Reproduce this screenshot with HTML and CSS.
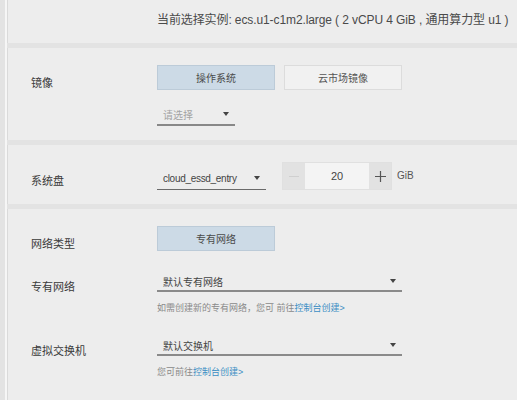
FILE: index.html
```html
<!DOCTYPE html>
<html lang="zh">
<head>
<meta charset="utf-8">
<link rel="stylesheet" href="styles.css">
</head>
<body>
<div class="page">
  <section class="panel panel-info">
    <div class="row">
      <div class="label"></div>
      <div class="info">当前选择实例: ecs.u1-c1m2.large ( 2 vCPU 4 GiB , 通用算力型 u1 )</div>
    </div>
  </section>

  <section class="panel panel-image">
    <div class="row row-btns">
      <div class="label label-low">镜像</div>
      <div class="btns">
        <button class="tab active">操作系统</button>
        <button class="tab">云市场镜像</button>
      </div>
    </div>
    <div class="row row-sub">
      <div class="label"></div>
      <div class="select select-sm placeholder"><span>请选择</span><i class="caret"></i></div>
    </div>
  </section>

  <section class="panel panel-disk">
    <div class="row">
      <div class="label">系统盘</div>
      <div class="select select-md"><span>cloud_essd_entry</span><i class="caret"></i></div>
      <div class="num">
        <span class="num-btn minus"><svg width="10" height="10" viewBox="0 0 10 10"><path d="M0 5.5h10" stroke="#cfcfcf" stroke-width="1"/></svg></span>
        <span class="num-val">20</span>
        <span class="num-btn plus"><svg width="11" height="11" viewBox="0 0 11 11"><path d="M0 5.5h11M5.5 0v11" stroke="#555" stroke-width="1.2"/></svg></span>
      </div>
      <span class="unit">GiB</span>
    </div>
  </section>

  <section class="panel panel-net">
    <div class="row row-btns">
      <div class="label label-low">网络类型</div>
      <div class="btns">
        <button class="tab active">专有网络</button>
      </div>
    </div>
    <div class="row row-vpc">
      <div class="label label-low">专有网络</div>
      <div class="field">
        <div class="select select-lg"><span>默认专有网络</span><i class="caret"></i></div>
        <div class="help">如需创建新的专有网络，您可 前往<a>控制台创建&gt;</a></div>
      </div>
    </div>
    <div class="row row-vsw">
      <div class="label label-low">虚拟交换机</div>
      <div class="field">
        <div class="select select-lg"><span>默认交换机</span><i class="caret"></i></div>
        <div class="help">您可前往<a>控制台创建&gt;</a></div>
      </div>
    </div>
  </section>
</div>
</body>
</html>
```

FILE: styles.css
```css
* { box-sizing: border-box; }
html, body {
  margin: 0;
  padding: 0;
  background: #e3e3e3;
  font-family: "Liberation Sans", Arial, "Noto Sans CJK SC", sans-serif;
  color: #444;
  height: 400px;
  overflow: hidden;
}
.page {
  margin-left: 5px;
  border-left: 2px solid #f6f6f6;
  height: 400px;
  display: flex;
  flex-direction: column;
  gap: 5px;
}
.panel {
  background: #ededed;
  padding-left: 23px;
  border-left: 1px solid #dadada;
}
.row {
  display: flex;
  align-items: center;
}
.label {
  width: 126px;
  flex: none;
  font-size: 11px;
  color: #3a3a3a;
}
.label-low { padding-top: 8px; }

.panel-info { height: 43px; padding-top: 10px; }
.info { font-size: 12px; color: #4a4a4a; letter-spacing: -0.1px; }

.panel-image { height: 92px; padding-top: 17px; }
.btns { display: flex; gap: 9px; }
.tab {
  width: 118px;
  height: 25px;
  font-family: inherit;
  font-size: 10px;
  color: #555;
  background: #f1f1f1;
  border: 1px solid #dcdcdc;
  padding: 0;
}
.tab.active {
  background: #ccdae6;
  border-color: #bccbd8;
  color: #4a4a4a;
}
.row-sub { margin-top: 12px; }

.select {
  height: 24px;
  display: flex;
  align-items: center;
  justify-content: space-between;
  padding: 2px 6px 0 6px;
  border-bottom: 1.5px solid #6a6a6a;
  font-size: 10px;
  color: #444;
}
.select.placeholder { color: #a3a3a3; border-bottom-color: #888; border-bottom-width: 2px; }
.select-sm { width: 78px; }
.select-md { width: 109px; }
.select-md span { font-size: 10px; letter-spacing: -0.3px; }
.select-lg { width: 245px; border-bottom-width: 2px; border-bottom-color: #8a8a8a; padding-top: 4px; }
.caret {
  width: 0;
  height: 0;
  border-left: 3.5px solid transparent;
  border-right: 3.5px solid transparent;
  border-top: 4px solid #444;
}

.panel-disk { height: 59px; padding-top: 17px; }
.panel-disk .label { padding-top: 7px; }
.panel-disk .select { margin-top: 3px; }
.num {
  margin-left: 16px;
  width: 110px;
  height: 28px;
  display: flex;
  background: #f4f4f4;
  border: 1px solid #e0e0e0;
}
.num-btn {
  width: 22px;
  display: flex;
  align-items: center;
  justify-content: center;
  background: #e2e2e2;
}
.num-val {
  flex: 1;
  display: flex;
  align-items: center;
  justify-content: center;
  font-size: 11px;
  color: #444;
}
.unit {
  margin-left: 5px;
  font-size: 10px;
  color: #555;
  align-self: flex-start;
  margin-top: 8px;
}

.panel-net { flex: 1; padding-top: 17px; }
.row-vpc { margin-top: 17px; align-items: flex-start; }
.row-vpc .label, .row-vsw .label { padding-top: 10px; }
.row-vsw { margin-top: 18px; align-items: flex-start; }
.field { display: flex; flex-direction: column; }
.help {
  margin-top: 9px;
  font-size: 9px;
  color: #8a8a8a;
}
.help a { color: #3b8dc4; }
```
